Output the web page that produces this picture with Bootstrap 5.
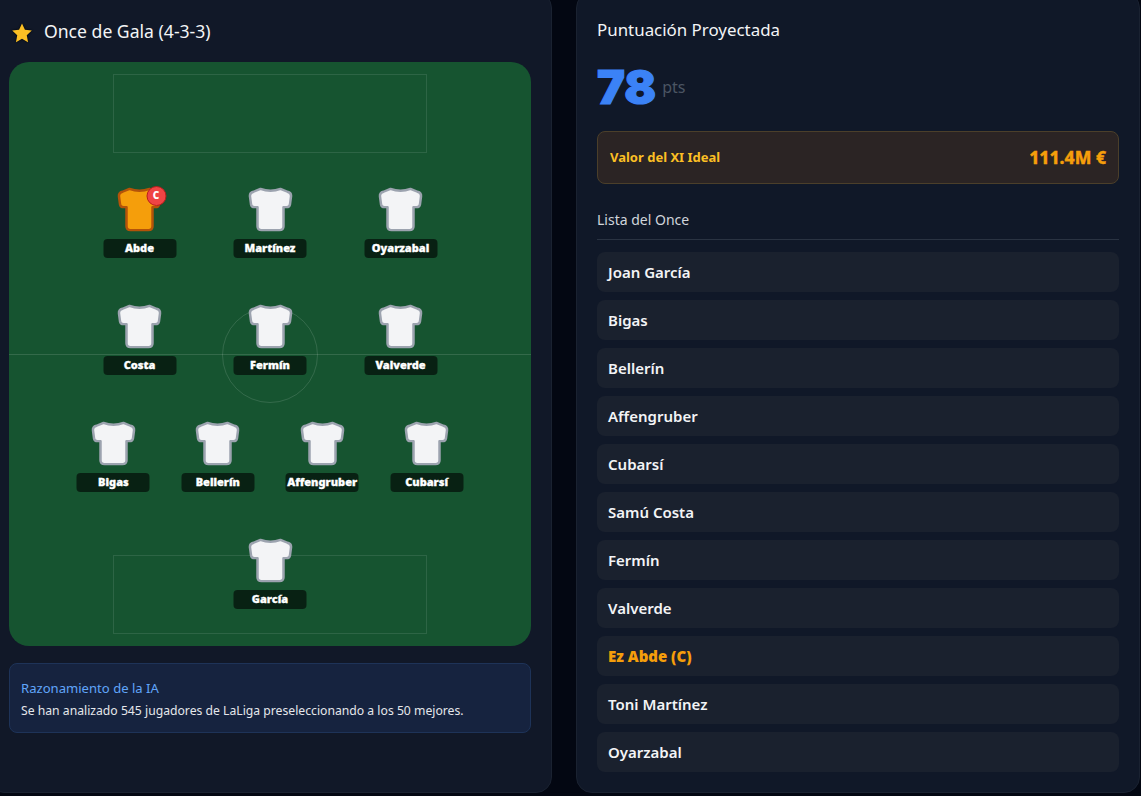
<!DOCTYPE html>
<html lang="es">
<head>
  <meta charset="UTF-8" />
  <meta name="viewport" content="width=device-width, initial-scale=1.0" />
  <title>Once de Gala</title>
  <link href="https://cdn.jsdelivr.net/npm/bootstrap@5.3.0/dist/css/bootstrap.min.css" rel="stylesheet">
  <style>
    html, body { height: 100%; overflow: hidden; }
    body { background: #030712; font-family: "Noto Sans", "Open Sans", sans-serif; color: #f3f4f6; }
    .board { display: grid; grid-template-columns: 564px 564px; grid-template-rows: 801px; gap: 24px; margin: -8px 0 0 -12px; }
    .panel { border: 1px solid #1a2231; border-radius: 16px; padding: 20px; min-height: 0; }
    .panel-left { background: #111828; }
    .panel-right { background: #101828; }
    .panel-title { font-size: 17.6px; font-weight: 400; margin: 0; line-height: 24px; color: #f3f4f6; }
    .panel-right .panel-title { font-size: 16.9px; }
    .left-head { height: 49px; padding: 6px 0 0 2px; }
    .head-star { margin-top: 3px; margin-right: 3px; filter: drop-shadow(0 0 1px #000); }
    .pitch { position: relative; height: 584px; background: #165430; border-radius: 20px; overflow: hidden; }
    .box-top, .box-bottom { position: absolute; left: 104px; width: 314px; height: 79px; border: 1px solid rgba(255,255,255,.1); }
    .box-top { top: 12px; }
    .box-bottom { bottom: 12px; }
    .mid-line { position: absolute; left: 0; right: 0; top: 292px; border-top: 1px solid rgba(255,255,255,.13); }
    .mid-circle { position: absolute; left: 213px; top: 245px; width: 96px; height: 96px; border: 1px solid rgba(255,255,255,.13); border-radius: 50%; }
    .player { position: absolute; width: 73px; transform: translateX(-50%); }
    .shirt { display: block; width: 46px; height: 46px; margin: 0 auto 7px; }
    .shirt path { fill: #f3f4f6; stroke: #9ca3af; stroke-width: 2.5; stroke-linejoin: round; }
    .shirt-cap path { fill: #f59e0b; stroke: #b45309; }
    .cap-mark { position: absolute; left: 43px; top: 0; width: 20px; height: 20px; border-radius: 50%; background: #ef4444; border: 1.5px solid #b91c1c; color: #fff; font-size: 10px; font-weight: 900; line-height: 17px; text-align: center; }
    .player-name { height: 19px; background: rgba(0,0,0,.6); border-radius: 4px; color: #fff; font-size: 11px; font-weight: 900; line-height: 18px; text-align: center; white-space: nowrap; -webkit-text-stroke: .3px #fff; }
    .reason { margin-top: 17px; height: 70px; padding: 15px 11px; background: #16233f; border: 1px solid #1e3358; border-radius: 8px; }
    .reason-title { font-size: 13.1px; line-height: 18px; color: #60a5fa; margin-bottom: 5px; }
    .reason-text { font-size: 12.2px; line-height: 18px; color: #e5e7eb; }
    .right-head { padding-top: 5px; }
    .score { display: flex; align-items: center; gap: 6px; margin-top: 13px; height: 59px; }
    .score-num { font-family: Inter, sans-serif; font-size: 47px; font-weight: 900; line-height: 59px; color: #3b82f6; -webkit-text-stroke: 1.2px #3b82f6; margin-top: 4px; }
    .score-unit { font-size: 16px; color: #4b5563; margin-top: 5px; }
    .value-box { margin-top: 17px; height: 53px; padding: 0 12px; background: #2b2424; border: 1px solid #4b3f2a; border-radius: 8px; }
    .value-label { font-size: 13px; font-weight: 700; color: #fbbf24; }
    .value-num { font-size: 17.5px; font-weight: 800; color: #f59e0b; -webkit-text-stroke: .3px #f59e0b; }
    .list-head { margin-top: 26px; height: 30px; font-size: 14px; line-height: 20px; color: #d1d5db; border-bottom: 1px solid #2a3342; }
    .eleven { margin-top: 12px; }
    .eleven-row { height: 40px; padding: 0 11px; margin-bottom: 8px; background: #1a212e; border-radius: 8px; font-size: 15px; font-weight: 600; line-height: 40px; color: #f3f4f6; }
    .eleven-cap { color: #f59e0b; font-weight: 900; }
  </style>
</head>
<body>
  <div class="board">
    <section class="panel panel-left">
      <div class="left-head d-flex align-items-start gap-2">
        <svg class="head-star" width="22" height="22" viewBox="0 0 24 24"><path d="M12 1.500l3.200 6.900 7.500.9-5.500 5.200 1.400 7.500L12 18.400l-6.600 3.600 1.400-7.500L1.300 9.300l7.500-.9z" fill="#fbbf24"/></svg>
        <h2 class="panel-title">Once de Gala (4-3-3)</h2>
      </div>
      <div class="pitch" id="pitch">
        <div class="box-top"></div>
        <div class="box-bottom"></div>
        <div class="mid-line"></div>
        <div class="mid-circle"></div>
      </div>
      <div class="reason">
        <div class="reason-title">Razonamiento de la IA</div>
        <div class="reason-text">Se han analizado 545 jugadores de LaLiga preseleccionando a los 50 mejores.</div>
      </div>
    </section>
    <section class="panel panel-right">
      <div class="right-head"><h2 class="panel-title">Puntuación Proyectada</h2></div>
      <div class="score"><span class="score-num">78</span><span class="score-unit">pts</span></div>
      <div class="value-box d-flex align-items-center justify-content-between">
        <span class="value-label">Valor del XI Ideal</span>
        <span class="value-num">111.4M €</span>
      </div>
      <div class="list-head">Lista del Once</div>
      <div class="eleven" id="eleven"></div>
    </section>
  </div>

  <script>
    const shirtPath = 'M13 3Q23 7 33 3L40 6Q44 7 43.500 11L42.500 19Q42 22 39 22L36 22L36 42Q36 46 32 46L14 46Q10 46 10 42L10 22L7 22Q4 22 3.500 19L2.500 11Q2 7 6 6Z';
    const players = [
      { name: 'Abde', x: 25, y: 124, cap: true },
      { name: 'Martínez', x: 50, y: 124 },
      { name: 'Oyarzabal', x: 75, y: 124 },
      { name: 'Costa', x: 25, y: 241 },
      { name: 'Fermín', x: 50, y: 241 },
      { name: 'Valverde', x: 75, y: 241 },
      { name: 'Bigas', x: 20, y: 358 },
      { name: 'Bellerín', x: 40, y: 358 },
      { name: 'Affengruber', x: 60, y: 358 },
      { name: 'Cubarsí', x: 80, y: 358 },
      { name: 'García', x: 50, y: 475 }
    ];
    const eleven = ['Joan García', 'Bigas', 'Bellerín', 'Affengruber', 'Cubarsí', 'Samú Costa', 'Fermín', 'Valverde', 'Ez Abde (C)', 'Toni Martínez', 'Oyarzabal'];

    const pitch = document.getElementById('pitch');
    players.forEach(p => {
      const el = document.createElement('div');
      el.className = 'player';
      el.style.left = p.x + '%';
      el.style.top = p.y + 'px';
      el.innerHTML = `
        <svg class="shirt ${p.cap ? 'shirt-cap' : ''}" viewBox="0 0 46 48" preserveAspectRatio="none"><path d="${shirtPath}"/></svg>
        ${p.cap ? '<span class="cap-mark">C</span>' : ''}
        <div class="player-name">${p.name}</div>`;
      pitch.appendChild(el);
    });

    const list = document.getElementById('eleven');
    eleven.forEach(name => {
      const row = document.createElement('div');
      row.className = 'eleven-row' + (name.includes('(C)') ? ' eleven-cap' : '');
      row.innerText = name;
      list.appendChild(row);
    });
  </script>
  <script src="https://cdn.jsdelivr.net/npm/bootstrap@5.3.0/dist/js/bootstrap.bundle.min.js"></script>
</body>
</html>
